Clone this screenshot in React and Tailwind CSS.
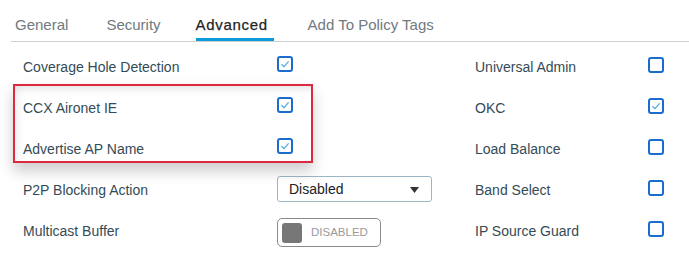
import React from "react";

const FONT = { fontFamily: '"Liberation Sans", Arial, sans-serif' };

function Check({ checked }) {
  return (
    <div className="w-[16px] h-[16px] border-2 border-[#1a6dcf] rounded-[3px] flex items-center justify-center bg-white">
      {checked && (
        <svg width="10" height="10" viewBox="0 0 10 10">
          <path d="M1.5 5.2 L4 7.6 L8.6 2.4" fill="none" stroke="#4aa8e2" strokeWidth="1.2" />
        </svg>
      )}
    </div>
  );
}

function LeftRow({ label, children }) {
  return (
    <div className="h-[41px] flex items-center">
      <div className="w-[254px] text-[14px] text-[#344b56]">{label}</div>
      {children}
    </div>
  );
}

function RightRow({ label, checked }) {
  return (
    <div className="h-[41px] flex items-center">
      <div className="w-[173px] text-[14px] text-[#344b56]">{label}</div>
      <div className="self-start mt-[10px]">
        <Check checked={checked} />
      </div>
    </div>
  );
}

export default function App() {
  return (
    <div className="w-[689px] h-[257px] bg-white relative overflow-hidden" style={FONT}>
      <div className="flex pt-[16px] text-[15px] leading-[17px] text-[#6f7a80]">
        <div className="ml-[15px]">
          <div>General</div>
        </div>
        <div className="ml-[38px]">
          <div>Security</div>
        </div>
        <div className="ml-[35px] w-[78px]">
          <div className="text-[#1f2326] tracking-[0.7px] [-webkit-text-stroke:0.25px_#1f2326]">Advanced</div>
          <div className="mt-[5px] h-[3px] bg-[#0d9ad8]" />
        </div>
        <div className="ml-[34px]">
          <div>Add To Policy Tags</div>
        </div>
      </div>
      <div className="ml-[11px] h-px bg-[#cdd0d2]" />

      <div className="flex mt-[5px]">
        <div className="w-[475px] pl-[23px]">
          <LeftRow label="Coverage Hole Detection">
            <div className="self-start mt-[9px]">
              <Check checked />
            </div>
          </LeftRow>
          <LeftRow label="CCX Aironet IE">
            <div className="self-start mt-[9px]">
              <Check checked />
            </div>
          </LeftRow>
          <LeftRow label="Advertise AP Name">
            <div className="self-start mt-[9px]">
              <Check checked />
            </div>
          </LeftRow>
          <LeftRow label="P2P Blocking Action">
            <div className="self-start mt-[6px] w-[155px] h-[26px] border border-[#9db6c6] rounded-[3px] flex items-center justify-between pl-[11px] pr-[12px] text-[14px] text-[#222]">
              <span>Disabled</span>
              <svg width="9" height="6" viewBox="0 0 9 6" className="mt-[2px]">
                <path d="M0 0 H9 L4.5 6 Z" fill="#333" />
              </svg>
            </div>
          </LeftRow>
          <LeftRow label="Multicast Buffer">
            <div className="mt-[2px] w-[104px] h-[29px] border border-[#8a8a8a] rounded-[5px] flex items-center pl-[4px]">
              <div className="w-[20px] h-[20px] bg-[#777] rounded-[3px]" />
              <span className="ml-[9px] text-[11.5px] text-[#9a9a9a]">DISABLED</span>
            </div>
          </LeftRow>
        </div>
        <div>
          <RightRow label="Universal Admin" />
          <RightRow label="OKC" checked />
          <RightRow label="Load Balance" />
          <RightRow label="Band Select" />
          <RightRow label="IP Source Guard" />
        </div>
      </div>

      <div className="absolute left-[13px] top-[84px] w-[300px] h-[79px] border-2 border-[#dc2840] shadow-[0_8px_14px_rgba(0,0,0,0.2),inset_0_9px_10px_-7px_rgba(0,0,0,0.12),inset_9px_0_10px_-7px_rgba(0,0,0,0.08)] pointer-events-none" />
    </div>
  );
}
